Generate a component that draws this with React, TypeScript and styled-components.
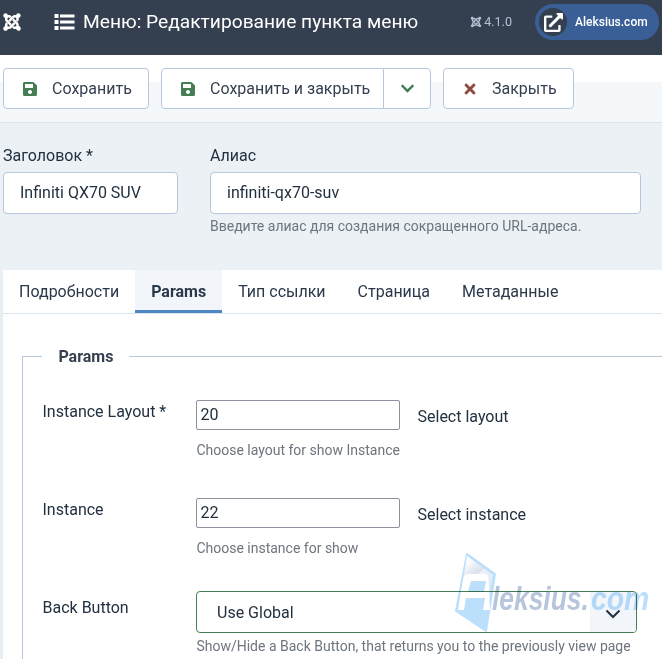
import React from "react";
import styled, { createGlobalStyle, css } from "styled-components";
import { FaJoomla, FaSave, FaTimes, FaChevronDown, FaExternalLinkAlt } from "react-icons/fa";

const GlobalStyle = createGlobalStyle`
  *, *::before, *::after { box-sizing: border-box; }
  html, body { margin: 0; padding: 0; }
  body {
    overflow: hidden;
    background: #ebf1f5;
    color: #22262a;
    font: 400 16px/24px Roboto, "Liberation Sans", sans-serif;
  }
  input, button { font: inherit; color: inherit; }
`;

const Page = styled.div`
  position: relative;
  display: flex;
  flex-direction: column;
  width: 662px;
  height: 659px;
  overflow: hidden;
`;

const Header = styled.header`
  display: flex;
  align-items: center;
  flex: none;
  height: 55px;
  padding: 0 3px 11px 2px;
  background: #343f4f;
  color: #fff;
`;

const Title = styled.h1`
  display: flex;
  align-items: center;
  gap: 8px;
  margin: 0 auto 0 32px;
  font-size: 19.2px;
  font-weight: 400;
  line-height: 24px;
  white-space: nowrap;
`;

const Version = styled.div`
  display: flex;
  align-items: center;
  gap: 2px;
  margin-right: 23px;
  color: #b4c1d2;
  font-size: 12.6px;
`;

const SitePill = styled.a`
  display: flex;
  align-items: center;
  gap: 8px;
  width: 124px;
  height: 36px;
  padding-left: 4px;
  border-radius: 18px;
  background: #3a5f97;
  font-size: 12px;
  font-weight: 500;
`;

const PillIcon = styled.span`
  display: flex;
  align-items: center;
  justify-content: center;
  width: 28px;
  height: 28px;
  border-radius: 50%;
  background: #343f4f;
`;

const Toolbar = styled.div`
  display: flex;
  gap: 12px;
  flex: none;
  height: 68px;
  padding: 13px 3px 0;
  border-bottom: 1px solid #dbe5ee;
  background: linear-gradient(#fff 27px, #f4f8fb 27px);
`;

const ButtonGroup = styled.div`
  display: flex;
`;

const ToolButton = styled.button<{ $width: number; $part?: "start" | "end" }>`
  display: flex;
  align-items: center;
  gap: 14px;
  width: ${(p) => p.$width}px;
  height: 41px;
  padding: 0 0 0 18px;
  border: 1px solid #b6c7de;
  border-radius: 4px;
  background: #fff;
  color: #343f4f;
  white-space: nowrap;
  ${(p) => p.$part === "start" && css`border-radius: 4px 0 0 4px;`}
  ${(p) =>
    p.$part === "end" &&
    css`
      justify-content: center;
      margin-left: -1px;
      padding: 0;
      border-radius: 0 4px 4px 0;
    `}
`;

const ButtonIcon = styled.span<{ $color: string }>`
  display: flex;
  justify-content: center;
  min-width: 16px;
  color: ${(p) => p.$color};
`;

const TitleForm = styled.section`
  display: grid;
  grid-template-columns: 175px 431px;
  column-gap: 32px;
  flex: none;
  height: 147px;
  padding: 21px 0 0 3px;
`;

const FieldLabel = styled.label`
  display: block;
  height: 28px;
  color: #22303f;
`;

const TextField = styled.input`
  display: block;
  width: 100%;
  height: 42px;
  padding: 0 16px 2px;
  border: 1px solid #b6c7de;
  border-radius: 4px;
  background: #fff;
  color: #22303f;
  outline: none;
`;

const Hint = styled.div`
  color: #6d757e;
  font-size: 14px;
  line-height: 24px;
  white-space: nowrap;
`;

const Card = styled.main`
  flex: 1;
  margin-left: 3px;
  background: #fff;
  box-shadow: 0 4px 5px #dce5ee;
`;

const Tabs = styled.nav`
  display: flex;
  height: 44px;
  border-bottom: 1px solid #dbe5ee;
`;

const Tab = styled.a<{ $active?: boolean }>`
  height: 43px;
  padding: 10px 16px 0;
  color: #2a384a;
  ${(p) =>
    p.$active &&
    css`
      border-bottom: 3px solid #4f87c4;
      background: #f2f6fb;
      font-weight: 700;
    `}
`;

const Fieldset = styled.fieldset`
  min-width: 0;
  height: 360px;
  margin: 30px -20px 0 19px;
  padding: 31px 0 0 19px;
  border: 1px solid #b6c7de;
`;

const Legend = styled.legend`
  padding: 0 15.5px 0 16.4px;
  color: #343f4f;
  font-weight: 700;
  line-height: 25px;
`;

const Row = styled.div`
  display: grid;
  grid-template-columns: 154px 441px;
  height: 98px;
`;

const RowLabel = styled.label`
  padding-left: 0.5px;
  color: #22303f;
`;

const Inline = styled.div`
  display: flex;
  align-items: center;
  gap: 17.5px;
  height: 30px;
  color: #22303f;
`;

const ActionText = styled.span`
  padding-top: 3px;
`;

const PlainInput = styled.input`
  width: 204px;
  height: 30px;
  padding: 0 3.5px 2px;
  border: 1px solid #8f8f9d;
  border-radius: 2px;
  background: #fff;
  outline: none;
`;

const Select = styled.div`
  display: flex;
  align-items: stretch;
  justify-content: space-between;
  width: 441px;
  height: 42px;
  margin-top: -5px;
  padding-left: 20px;
  border: 1px solid #457d54;
  border-radius: 4px;
  color: #22303f;
  line-height: 42px;
  overflow: hidden;
`;

const SelectArrow = styled.span`
  display: flex;
  align-items: center;
  justify-content: center;
  width: 46px;
  padding-top: 3px;
  background: #f2f6fb;
`;

const RowHint = styled(Hint)<{ $tight?: boolean }>`
  margin-top: ${(p) => (p.$tight ? 1 : 8)}px;
  padding-left: 0.4px;
`;

/* Multiplied so that the field borders stay visible through the mark. */
const Watermark = styled.svg`
  position: absolute;
  left: 450px;
  top: 548px;
  pointer-events: none;
  mix-blend-mode: multiply;
`;

const params = [
  { label: "Instance Layout *", value: "20", action: "Select layout", hint: "Choose layout for show Instance" },
  { label: "Instance", value: "22", action: "Select instance", hint: "Choose instance for show" },
];

const tabs = ["Подробности", "Params", "Тип ссылки", "Страница", "Метаданные"];

function ListIcon() {
  return (
    <svg width="21" height="17" viewBox="0 0 21 17" fill="currentColor">
      {[0, 6, 12].map((y) => (
        <React.Fragment key={y}>
          <rect x="0.500" y={y} width="4" height="4" />
          <rect x="6" y={y + 0.5} width="14.500" height="3" />
        </React.Fragment>
      ))}
    </svg>
  );
}

function BrandWatermark() {
  return (
    <Watermark width="212" height="90" viewBox="0 0 212 90">
      <defs>
        <linearGradient id="sheen" x1="0.2" y1="0" x2="0.7" y2="0.8">
          <stop offset="0.1" stopColor="#fff" />
          <stop offset="0.55" stopColor="#d8e0ea" />
          <stop offset="0.6" stopColor="#eef3f9" />
          <stop offset="1" stopColor="#dce9f5" />
        </linearGradient>
      </defs>
      <path d="M17 6 45 26 36 83 6 63Z" fill="#bcdffb" stroke="#bcdffb" strokeWidth="2" strokeLinejoin="round" />
      <path d="M17 8 43 27 39 50 10 50Z" fill="url(#sheen)" />
      <path d="M8 62 13 31Q14 26 20 26H34Q39 26 38.500 31L40 62H33L35 50H16L14 62Z" fill="#fff" />
      <path d="M21 33H36L34 44H18Z" fill="#bcdffb" />
      <g fontFamily="Liberation Sans, sans-serif" fontSize="33" fontStyle="italic" fontWeight="700">
        <text transform="translate(42 62) scale(0.8 1)" fill="#b7c6dd">leksius.</text>
        <text transform="translate(141 62) scale(0.86 1)" fill="#bcdffb">com</text>
      </g>
    </Watermark>
  );
}

export default function App() {
  return (
    <Page>
      <GlobalStyle />
      <Header>
        <FaJoomla size={20} />
        <Title>
          <ListIcon />
          Меню: Редактирование пункта меню
        </Title>
        <Version>
          <FaJoomla size={12} />
          4.1.0
        </Version>
        <SitePill>
          <PillIcon>
            <FaExternalLinkAlt size={19} />
          </PillIcon>
          Aleksius.com
        </SitePill>
      </Header>
      <Toolbar>
        <ToolButton $width={146}>
          <ButtonIcon $color="#457d54"><FaSave size={16} /></ButtonIcon>
          Сохранить
        </ToolButton>
        <ButtonGroup>
          <ToolButton $width={223} $part="start">
            <ButtonIcon $color="#457d54"><FaSave size={16} /></ButtonIcon>
            Сохранить и закрыть
          </ToolButton>
          <ToolButton $width={48} $part="end">
            <ButtonIcon $color="#457d54"><FaChevronDown size={15} /></ButtonIcon>
          </ToolButton>
        </ButtonGroup>
        <ToolButton $width={131}>
          <ButtonIcon $color="#8f4a3f"><FaTimes size={16} /></ButtonIcon>
          Закрыть
        </ToolButton>
      </Toolbar>
      <TitleForm>
        <div>
          <FieldLabel>Заголовок *</FieldLabel>
          <TextField defaultValue="Infiniti QX70 SUV" />
        </div>
        <div>
          <FieldLabel>Алиас</FieldLabel>
          <TextField defaultValue="infiniti-qx70-suv" />
          <Hint>Введите алиас для создания сокращенного URL-адреса.</Hint>
        </div>
      </TitleForm>
      <Card>
        <Tabs>
          {tabs.map((name) => (
            <Tab key={name} $active={name === "Params"}>{name}</Tab>
          ))}
        </Tabs>
        <Fieldset>
          <Legend>Params</Legend>
          {params.map((p) => (
            <Row key={p.label}>
              <RowLabel>{p.label}</RowLabel>
              <div>
                <Inline>
                  <PlainInput defaultValue={p.value} />
                  <ActionText>{p.action}</ActionText>
                </Inline>
                <RowHint>{p.hint}</RowHint>
              </div>
            </Row>
          ))}
          <Row>
            <RowLabel>Back Button</RowLabel>
            <div>
              <Select>
                Use Global
                <SelectArrow>
                  <svg width="16" height="10" viewBox="0 0 16 10" fill="none" stroke="#22303f" strokeWidth="2">
                    <path d="M1.5 1.5 8 8 14.500 1.500" />
                  </svg>
                </SelectArrow>
              </Select>
              <RowHint $tight>Show/Hide a Back Button, that returns you to the previously view page</RowHint>
            </div>
          </Row>
        </Fieldset>
      </Card>
      <BrandWatermark />
    </Page>
  );
}
